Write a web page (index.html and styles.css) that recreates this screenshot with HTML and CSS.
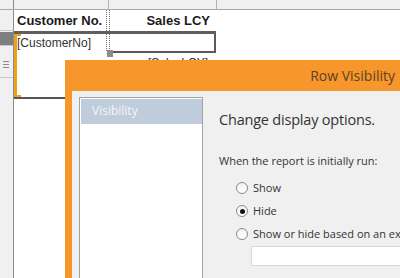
FILE: index.html
```html
<!DOCTYPE html>
<html>
<head>
<meta charset="utf-8">
<link rel="stylesheet" href="styles.css">
</head>
<body>
<div class="sheet">
  <div class="strip">
    <div class="s-gutter"></div>
    <div class="s-col1"></div>
    <div class="s-col2"></div>
    <div class="s-rest"></div>
  </div>
  <div class="table">
    <div class="gut gut-head"></div>
    <div class="hcell c1">Customer No.</div>
    <div class="split split-head"></div>
    <div class="hcell c2">Sales LCY</div>
    <div class="rest"></div>

    <div class="gut gut-detail">
      <div class="gut-sel"></div>
      <div class="gut-menu"><span></span><span></span><span></span></div>
      <div class="gut-line"></div>
    </div>
    <div class="dcell c1 bracket">[CustomerNo]</div>
    <div class="split split-detail"><div class="split-guide"></div></div>
    <div class="dcell c2">
      <div class="selbox"><span class="handle"></span></div>
      <div class="sales">[SalesLCY]</div>
    </div>
    <div class="rest"></div>

    <div class="gut gut-low"></div>
    <div class="low"></div>
    <div class="low"></div>
    <div class="low"></div>
    <div class="rest"></div>
  </div>

  <div class="dialog">
    <div class="titlebar"><span class="title">Row Visibility</span></div>
    <div class="dbody">
      <div class="nav">
        <div class="nav-item">Visibility</div>
      </div>
      <div class="content">
        <div class="heading">Change display options.</div>
        <div class="label">When the report is initially run:</div>
        <div class="options">
          <div class="opt"><span class="radio"></span><span>Show</span></div>
          <div class="opt"><span class="radio checked"></span><span>Hide</span></div>
          <div class="opt"><span class="radio"></span><span>Show or hide based on an expression</span></div>
          <div class="expr"></div>
        </div>
      </div>
    </div>
  </div>
</div>
</body>
</html>
```

FILE: styles.css
```css
html, body {
  margin: 0;
  padding: 0;
}
body {
  width: 400px;
  height: 278px;
  overflow: hidden;
  background: #ffffff;
  font-family: "Liberation Sans", Arial, sans-serif;
}
.sheet {
  position: relative;
  width: 400px;
  height: 278px;
  overflow: hidden;
  display: flex;
  flex-direction: column;
}
.strip {
  display: flex;
  height: 9px;
  background: #f0f0f0;
  border-bottom: 1px solid #a8a8a8;
  flex: none;
}
.s-gutter { width: 13px; border-right: 1px solid #8c8c8c; }
.s-col1 { width: 94px; border-right: 1px solid #b0b0b0; }
.s-col2 { width: 107px; border-right: 1px solid #b0b0b0; }
.s-rest { flex: 1; }

.table {
  flex: 1;
  display: grid;
  grid-template-columns: 14px 92px 4px 106px 1fr;
  grid-template-rows: 21px 68px 1fr;
}
.gut {
  background: #f0f0f0;
  border-right: 1px solid #8c8c8c;
}
.gut-head {
  border-bottom: 1px solid #c8c8c8;
}
.gut-detail {
  display: flex;
  flex-direction: column;
  padding-top: 1px;
}
.gut-sel {
  height: 13px;
  background: #7f7f7f;
  border-bottom: 1px solid #c8c8c8;
}
.gut-menu {
  margin: 15px 0 0 3px;
  display: flex;
  flex-direction: column;
  gap: 2px;
  width: 6px;
}
.gut-menu span {
  display: block;
  height: 1px;
  background: #8a8a8a;
}
.gut-line {
  margin-top: 9px;
  height: 1px;
  background: #c8c8c8;
}
.hcell {
  font-weight: bold;
  font-size: 13px;
  color: #1a1a1a;
  line-height: 21px;
  white-space: nowrap;
}
.hcell.c1 { padding-left: 3px; }
.hcell.c2 { text-align: right; padding-right: 6px; }
.split {
  border-left: 1px dotted #707070;
  border-right: 1px dotted #707070;
}
.split-detail {
  border: none;
  border-top: 3px solid #5f5f5f;
  border-bottom: 2px solid #555;
  position: relative;
}
.split-guide {
  height: 17px;
  border-left: 1px dotted #707070;
  border-right: 1px dotted #707070;
}
.dcell {
  border-top: 3px solid #5f5f5f;
  border-bottom: 2px solid #555;
  font-size: 12px;
  color: #333;
}
.dcell.c1 {
  position: relative;
  padding: 2px 0 0 3px;
}
.bracket::before {
  content: "";
  position: absolute;
  left: 0;
  top: 0;
  width: 4px;
  height: 59px;
  border-left: 3px solid #eea21b;
  border-top: 2px solid #eea21b;
  border-bottom: 2px solid #eea21b;
}
.dcell.c2 {
  display: flex;
  flex-direction: column;
}
.selbox {
  height: 17px;
  border-right: 2px solid #5a5a5a;
  border-bottom: 2px solid #5a5a5a;
  position: relative;
}
.handle {
  position: absolute;
  left: -3px;
  bottom: -6px;
  width: 6px;
  height: 7px;
  background: #8c8c8c;
}
.sales {
  margin-top: 3px;
  text-align: right;
  padding-right: 8px;
  line-height: 14px;
}
.rest { background: #fff; }
.gut-low { border-right: 1px solid #8c8c8c; }
.low { background: #fff; }

/* dialog */
.dialog {
  position: absolute;
  left: 65px;
  top: 60px;
  width: 345px;
  height: 230px;
  background: #f7962a;
  display: flex;
  flex-direction: column;
  font-family: "Open Sans", "Noto Sans", sans-serif;
}
.titlebar {
  height: 31px;
  display: flex;
  align-items: center;
  justify-content: flex-end;
  padding-right: 15px;
  flex: none;
}
.title {
  font-size: 14px;
  color: #5a4228;
}
.dbody {
  flex: 1;
  margin-left: 7px;
  background: #f0f0f0;
  display: flex;
  padding: 6px 0 0 7px;
}
.nav {
  width: 121px;
  background: #fff;
  border: 1px solid #a3a3a3;
  border-bottom: none;
  flex: none;
  padding: 1px 0 0 1px;
}
.nav-item {
  height: 25px;
  background: #bfccdb;
  color: #f4f6f9;
  font-size: 12px;
  line-height: 24px;
  padding-left: 11px;
}
.content {
  flex: 1;
  padding: 13px 0 0 16px;
  color: #333;
}
.heading {
  font-size: 14.5px;
  letter-spacing: -0.2px;
  line-height: 20px;
  white-space: nowrap;
}
.label {
  margin-top: 23px;
  font-size: 11px;
  line-height: 15px;
  white-space: nowrap;
}
.options {
  padding-left: 17px;
  margin-top: 12px;
  display: flex;
  flex-direction: column;
  gap: 7px;
}
.opt {
  display: flex;
  align-items: center;
  gap: 5px;
  font-size: 11px;
  line-height: 16px;
  white-space: nowrap;
}
.radio {
  width: 10px;
  height: 10px;
  border: 1px solid #8a8a8a;
  border-radius: 50%;
  background: linear-gradient(#f2f2f2, #ffffff);
  display: flex;
  align-items: center;
  justify-content: center;
  flex: none;
}
.radio.checked::after {
  content: "";
  width: 5px;
  height: 5px;
  border-radius: 50%;
  background: #111;
}
.expr {
  margin: -3px 0 0 15px;
  height: 18px;
  background: #fff;
  border: 1px solid #d6d6d6;
}
```
